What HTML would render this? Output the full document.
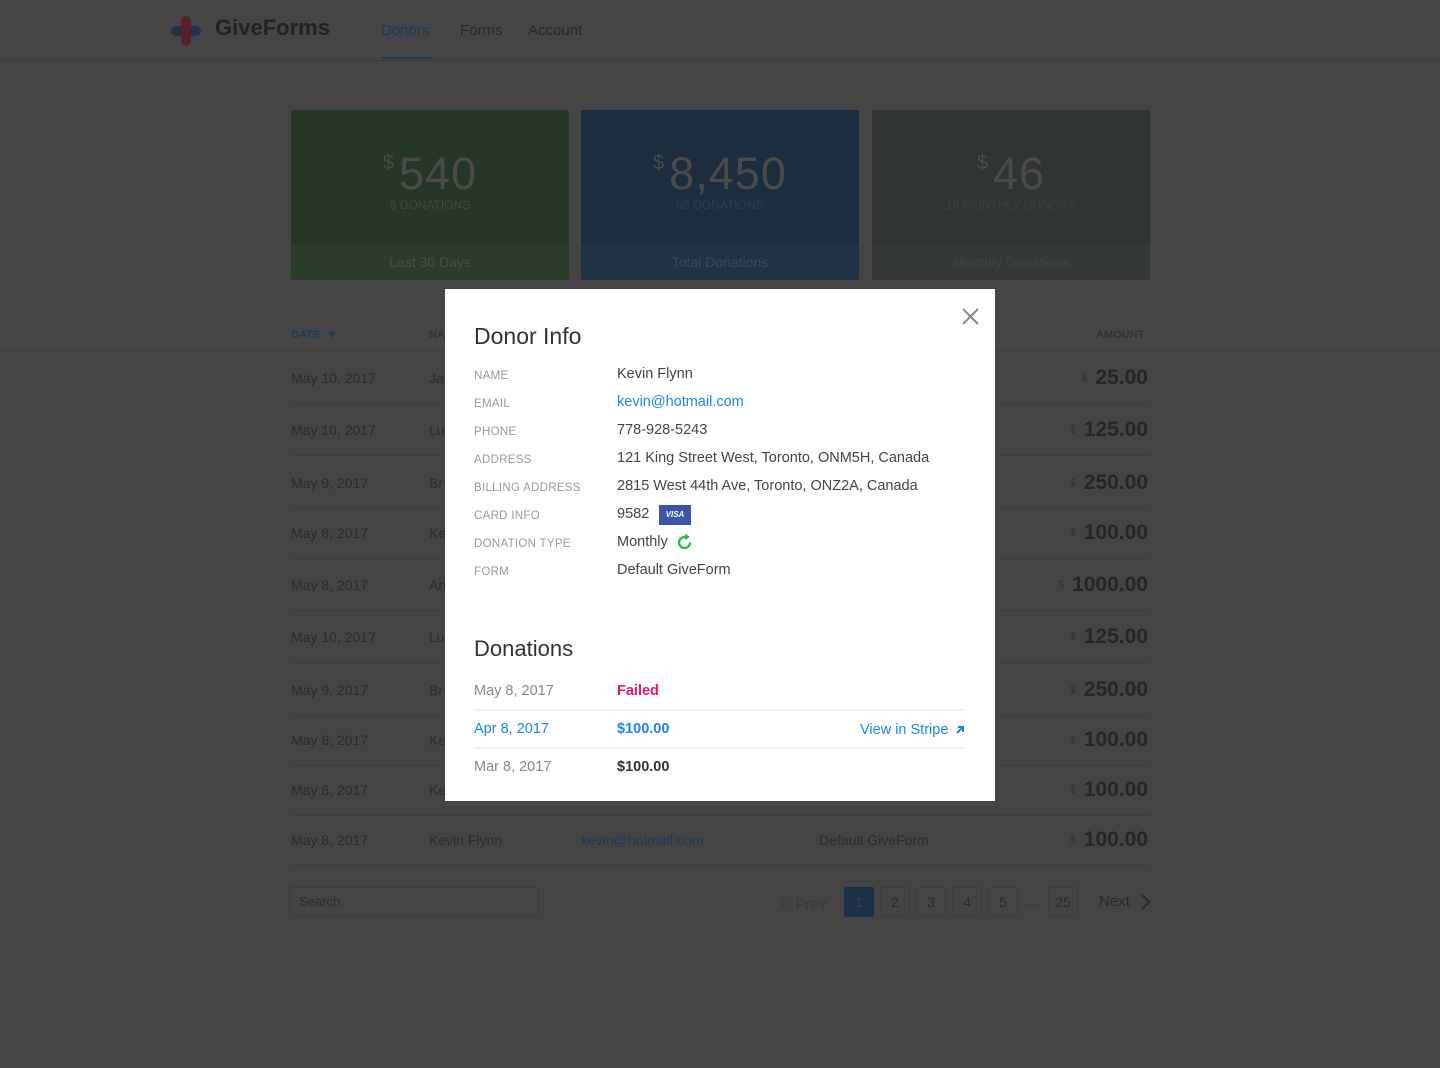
<!DOCTYPE html>
<html><head><meta charset="utf-8"><style>
*{box-sizing:border-box;margin:0;padding:0}
body{width:1440px;height:1068px;background:#444;font-family:"Liberation Sans",sans-serif;position:relative;overflow:hidden;color:#2b2b2b}
.a{position:absolute;white-space:nowrap}
.hdr{position:absolute;left:0;top:0;width:1440px;height:61px;background:#454545;border-bottom:1px solid #3c3c3c}
.card{position:absolute;top:110px;width:278px;height:170px;border-radius:2px;overflow:hidden;text-align:center}
.card .big{position:absolute;top:38px;left:0;right:0;font-size:45px;letter-spacing:1px;color:#4a4a4a}
.card .big sup{font-size:20px;vertical-align:20px;margin-right:4px}
.card .sub{position:absolute;top:88px;left:0;right:0;font-size:12px;color:#3e4a40}
.card .bot{position:absolute;bottom:0;left:0;right:0;height:36px;line-height:36px;font-size:14px;color:#444f45}
.row{position:absolute;left:291px;width:859px;height:1px;background:#3d3d3d}
.cell{position:absolute;font-size:14px;color:#2c2c2c}
.amt{position:absolute;right:292px;font-size:21px;font-weight:bold;color:#262626}
.amt small{font-size:11px;font-weight:normal;color:#333;margin-right:8px;vertical-align:3px}
.modal{position:absolute;left:445px;top:289px;width:550px;height:512px;background:#fff}
.lbl{position:absolute;left:29px;font-size:11.5px;color:#999;letter-spacing:.3px}
.val{position:absolute;left:172px;font-size:14.5px;color:#444}
.pg{position:absolute;top:887px;width:30px;height:30px;border:1px solid #3d3d3d;border-radius:2px;text-align:center;line-height:28px;font-size:14px;color:#2c2c2c}
</style></head><body>
<div class="hdr"></div>
<svg class="a" style="left:170px;top:14px" width="32" height="32" viewBox="0 0 32 32"><rect x="1" y="12" width="30" height="10" rx="5" fill="#1c3446"/><rect x="11" y="2" width="10" height="30" rx="5" fill="#5a1f2a" opacity=".95"/></svg>
<div class="a" style="left:215px;top:15px;font-size:22px;font-weight:bold;color:#222">GiveForms</div>
<div class="a" style="left:381px;top:22px;font-size:15px;color:#1d3a57">Donors</div>
<div class="a" style="left:382px;top:57px;width:50px;height:2px;background:#1d3a57"></div>
<div class="a" style="left:460px;top:22px;font-size:15px;color:#2a2a2a">Forms</div>
<div class="a" style="left:528px;top:22px;font-size:15px;color:#2a2a2a">Account</div>

<div class="card" style="left:291px;background:#253726"><div class="big"><sup>$</sup>540</div><div class="sub">5 DONATIONS</div><div class="bot" style="background:#2a3d2b">Last 30 Days</div></div>
<div class="card" style="left:581px;background:#1b2d3e"><div class="big"><sup>$</sup>8,450</div><div class="sub" style="color:#2e3e4e">58 DONATIONS</div><div class="bot" style="background:#203243;color:#3a4958">Total Donations</div></div>
<div class="card" style="left:872px;background:#313435"><div class="big"><sup>$</sup>46</div><div class="sub" style="color:#3c3f40">18 MONTHLY DONORS</div><div class="bot" style="background:#353839;color:#404344">Monthly Donations</div></div>

<div class="a" style="left:0;top:320px;width:1440px;height:31px;background:#464646;border-bottom:1px solid #3d3d3d"></div>
<div class="a" style="left:291px;top:329px;font-size:11px;font-weight:bold;color:#1d3a57">DATE &nbsp;▼</div>
<div class="a" style="left:429px;top:329px;font-size:11px;font-weight:bold;color:#333">NA</div>
<div class="a" style="left:1096px;top:329px;font-size:11px;font-weight:bold;color:#333">AMOUNT</div>

<div class="cell" style="left:291px;top:370px">May 10, 2017</div><div class="cell" style="left:429px;top:370px">Ja</div><div class="amt" style="top:366px"><small>$</small>25.00</div><div class="row" style="top:403px"></div>
<div class="cell" style="left:291px;top:422px">May 10, 2017</div><div class="cell" style="left:429px;top:422px">Lu</div><div class="amt" style="top:418px"><small>$</small>125.00</div><div class="row" style="top:455px"></div>
<div class="cell" style="left:291px;top:475px">May 9, 2017</div><div class="cell" style="left:429px;top:475px">Br</div><div class="amt" style="top:471px"><small>$</small>250.00</div><div class="row" style="top:508px"></div>
<div class="cell" style="left:291px;top:525px">May 8, 2017</div><div class="cell" style="left:429px;top:525px">Ke</div><div class="amt" style="top:521px"><small>$</small>100.00</div><div class="row" style="top:558px"></div>
<div class="cell" style="left:291px;top:577px">May 8, 2017</div><div class="cell" style="left:429px;top:577px">An</div><div class="amt" style="top:573px"><small>$</small>1000.00</div><div class="row" style="top:610px"></div>
<div class="cell" style="left:291px;top:629px">May 10, 2017</div><div class="cell" style="left:429px;top:629px">Lu</div><div class="amt" style="top:625px"><small>$</small>125.00</div><div class="row" style="top:662px"></div>
<div class="cell" style="left:291px;top:682px">May 9, 2017</div><div class="cell" style="left:429px;top:682px">Br</div><div class="amt" style="top:678px"><small>$</small>250.00</div><div class="row" style="top:715px"></div>
<div class="cell" style="left:291px;top:732px">May 8, 2017</div><div class="cell" style="left:429px;top:732px">Ke</div><div class="amt" style="top:728px"><small>$</small>100.00</div><div class="row" style="top:765px"></div>
<div class="cell" style="left:291px;top:782px">May 8, 2017</div><div class="cell" style="left:429px;top:782px">Ke</div><div class="amt" style="top:778px"><small>$</small>100.00</div><div class="row" style="top:815px"></div>
<div class="cell" style="left:291px;top:832px">May 8, 2017</div><div class="cell" style="left:429px;top:832px">Kevin Flynn</div><div class="cell" style="left:581px;top:832px;color:#1d3a57">kevin@hotmail.com</div><div class="cell" style="left:819px;top:832px">Default GiveForm</div><div class="amt" style="top:828px"><small>$</small>100.00</div><div class="row" style="top:865px"></div>

<div class="a" style="left:289px;top:887px;width:250px;height:30px;border:1px solid #3d3d3d;border-radius:2px;padding:6px 9px;font-size:13px;color:#2c2c2c">Search</div>
<div class="a" style="left:772px;top:893px;font-size:15px;color:#393939">〈 &nbsp;Prev</div>
<div class="pg" style="left:844px;background:#1b3148;border-color:#1b3148;color:#2a4460">1</div>
<div class="pg" style="left:880px">2</div><div class="pg" style="left:916px">3</div><div class="pg" style="left:952px">4</div><div class="pg" style="left:988px">5</div>
<div class="a" style="left:1026px;top:893px;font-size:14px;color:#2c2c2c">...</div>
<div class="pg" style="left:1048px">25</div>
<div class="a" style="left:1099px;top:893px;font-size:15px;color:#2a2a2a">Next</div>
<svg class="a" style="left:1139px;top:893px" width="12" height="18"><path d="M3 2l7 7-7 7" stroke="#2a2a2a" stroke-width="2" fill="none"/></svg>

<div class="modal">
<svg class="a" style="left:517px;top:19px" width="17" height="17"><path d="M1 1L16 16M16 1L1 16" stroke="#888" stroke-width="2"/></svg>
<div class="a" style="left:29px;top:34px;font-size:23px;color:#333">Donor Info</div>
<div class="lbl" style="top:81px">NAME</div><div class="val" style="top:77px">Kevin Flynn</div>
<div class="lbl" style="top:109px">EMAIL</div><div class="val" style="top:105px;color:#1a85f0">kevin@hotmail.com</div>
<div class="lbl" style="top:137px">PHONE</div><div class="val" style="top:133px">778-928-5243</div>
<div class="lbl" style="top:165px">ADDRESS</div><div class="val" style="top:161px">121 King Street West, Toronto, ONM5H, Canada</div>
<div class="lbl" style="top:193px">BILLING ADDRESS</div><div class="val" style="top:189px">2815 West 44th Ave, Toronto, ONZ2A, Canada</div>
<div class="lbl" style="top:221px">CARD INFO</div><div class="val" style="top:217px">9582</div>
<div class="a" style="left:214px;top:216px;width:32px;height:20px;background:#3b55a8;color:#fff;font-size:8px;font-weight:bold;font-style:italic;text-align:center;line-height:20px">VISA</div>
<div class="lbl" style="top:249px">DONATION TYPE</div><div class="val" style="top:245px">Monthly</div>
<svg class="a" style="left:232px;top:244px" width="16" height="18" viewBox="0 0 16 18"><path d="M13 9.5A5.5 5.5 0 1 1 9 4.2" stroke="#2bbb3a" stroke-width="2.3" fill="none"/><path d="M8 0.5l5 3.5-5 3z" fill="#2bbb3a"/></svg>
<div class="lbl" style="top:277px">FORM</div><div class="val" style="top:273px">Default GiveForm</div>
<div class="a" style="left:29px;top:347px;font-size:22px;color:#333">Donations</div>
<div class="a" style="left:29px;top:394px;font-size:14.5px;color:#888">May 8, 2017</div>
<div class="a" style="left:172px;top:394px;font-size:14.5px;color:#f0145a;font-weight:bold">Failed</div>
<div class="a" style="left:29px;top:420px;width:491px;height:2px;background:#f0f0f0"></div>
<div class="a" style="left:29px;top:432px;font-size:14.5px;color:#1a85f0">Apr 8, 2017</div>
<div class="a" style="left:172px;top:432px;font-size:14.5px;color:#1a85f0;font-weight:bold">$100.00</div>
<div class="a" style="left:415px;top:433px;font-size:14.5px;color:#1a85f0">View in Stripe</div>
<svg class="a" style="left:510px;top:436px" width="10" height="10"><path d="M2 8L8 2M3 2h5v5" stroke="#1a85f0" stroke-width="2" fill="none"/></svg>
<div class="a" style="left:29px;top:458px;width:491px;height:2px;background:#f0f0f0"></div>
<div class="a" style="left:29px;top:470px;font-size:14.5px;color:#888">Mar 8, 2017</div>
<div class="a" style="left:172px;top:470px;font-size:14.5px;color:#333;font-weight:bold">$100.00</div>
</div>
</body></html>
